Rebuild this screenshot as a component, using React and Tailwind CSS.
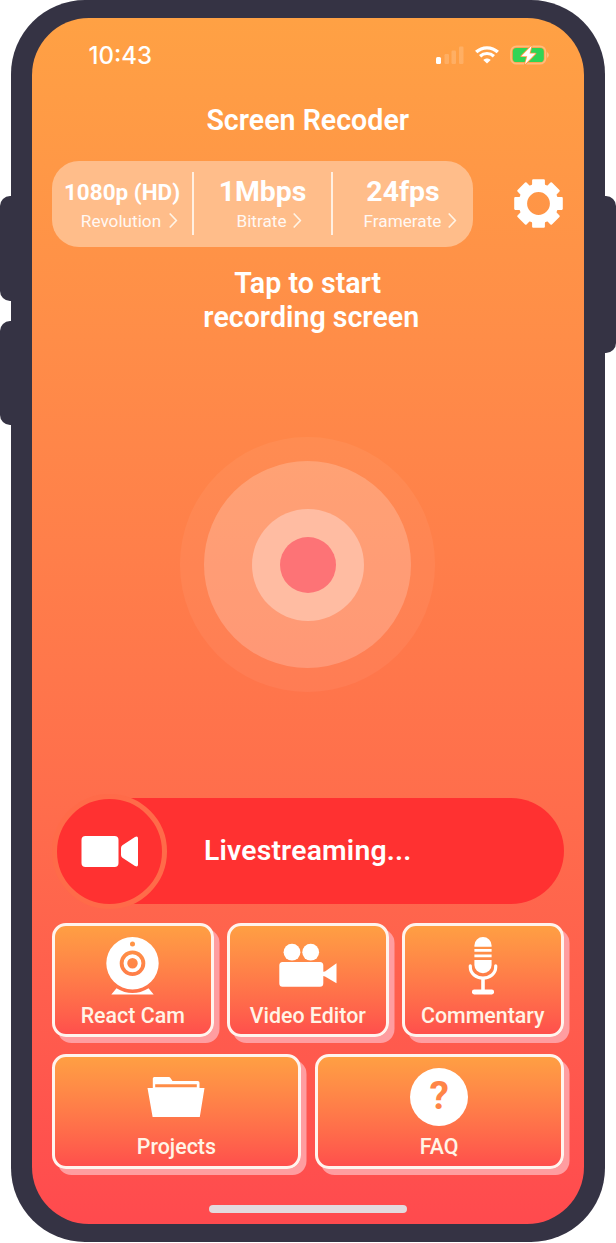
import React from "react";

function StatusBar() {
  return (
    <div className="flex h-[74px] items-center justify-between pl-[56.5px] pr-[34px] pt-px">
      <span className="font-['Inter',sans-serif] text-[24px] font-medium leading-none">10:43</span>
      <div className="flex items-center pb-0.5">
        <svg width="28" height="18" viewBox="0 0 28 18" fill="#fff" className="mr-[11px]">
          <rect x="0" y="11" width="5" height="7" rx="1.5" />
          <g opacity="0.17">
            <rect x="8.5" y="8" width="4.5" height="10" rx="1.2" />
            <rect x="15.5" y="4.5" width="4.5" height="13.5" rx="1.2" />
            <rect x="23" y="0.5" width="4.5" height="17.5" rx="1.2" />
          </g>
        </svg>
        <svg width="24" height="18" viewBox="0 0 24 18" className="mr-[11px]" fill="none" stroke="#fff">
          <path d="M1.2 6.1C7.2 .4 16.8 .4 22.8 6.1" strokeWidth="3.4" />
          <path d="M5.1 10.2C9 6.6 15 6.6 18.9 10.2" strokeWidth="3.2" />
          <path d="M8.3 14C10.3 12 13.7 12 15.7 14L12 17.6Z" fill="#fff" stroke="none" />
        </svg>
        <svg width="40" height="20" viewBox="0 0 40 20">
          <rect x="1" y="1.3" width="34.5" height="17.4" rx="5.5" fill="none" stroke="#fff" strokeOpacity=".3" strokeWidth="1.7" />
          <path d="M37.2 7Q40.4 10 37.2 13Z" fill="#fff" fillOpacity=".4" />
          <rect x="2.8" y="3" width="31" height="14" rx="3.6" fill="#30d455" />
          <path d="M21.6 .8L11.3 11.2H17.2L15 19.3L25.5 8.6H19.6Z" fill="#fff" stroke="#ff9b45" strokeWidth="1.8" paintOrder="stroke" strokeLinejoin="round" />
        </svg>
      </div>
    </div>
  );
}

function Chevron() {
  return (
    <svg width="9" height="15" viewBox="0 0 9 15" fill="none" stroke="#fff4e6" strokeWidth="1.7" strokeLinecap="round" strokeLinejoin="round">
      <path d="M1.2 1L7.4 7.5L1.2 14" />
    </svg>
  );
}

function Setting({ className, value, valueClass, label, gap }) {
  return (
    <div className={`flex flex-col items-center ${className}`}>
      <div className={`mt-[15px] h-8 whitespace-nowrap font-bold leading-8 ${valueClass}`}>{value}</div>
      <div className={`mt-[0.5px] flex h-6 items-center text-[17.2px] leading-6 ${gap}`}>
        <span className="opacity-90">{label}</span>
        <Chevron />
      </div>
    </div>
  );
}

function Gear() {
  const teeth = [0, 45, 90, 135, 180, 225, 270, 315];
  return (
    <svg width="49" height="49" viewBox="-24.5 -24.5 49 49" fill="#fff">
      <circle r="15.6" fill="none" stroke="#fff" strokeWidth="8.4" />
      {teeth.map((a) => (
        <path key={a} d="M-8.6 -16L-6.4 -19.2V-23.3Q-6.3 -24.3 -5.3 -24.3H5.3Q6.3 -24.3 6.4 -23.3V-19.2L8.6 -16Z" transform={`rotate(${a})`} />
      ))}
    </svg>
  );
}

function RecordButton() {
  return (
    <div className="mt-[103px] flex size-[255px] shrink-0 items-center justify-center self-center rounded-full bg-white/5">
      <div className="flex size-[207px] items-center justify-center rounded-full bg-white/20">
        <div className="flex size-[112px] items-center justify-center rounded-full bg-[#ffbca2]">
          <div className="size-14 rounded-full bg-[#fd7376]" />
        </div>
      </div>
    </div>
  );
}

function LiveBar() {
  return (
    <div className="mt-[106px] flex h-[106px] w-[511.5px] shrink-0">
      <div className="flex w-full items-center rounded-r-full bg-linear-to-r from-transparent from-[57px] to-[#ff3131] to-[57px]">
        <div className="-my-[5px] flex size-[115px] shrink-0 items-center justify-center rounded-full border-[5px] border-[#ff6b49] bg-[#ff3131]">
          <svg width="57" height="31" viewBox="0 0 57 31" fill="#fff">
            <rect x="0.5" y="0" width="37" height="31" rx="4" />
            <path d="M40 12Q40 10.2 41.4 9.3L54 .9Q57 -.4 57 2.2V28.8Q57 31.4 54 30.1L41.4 21.7Q40 20.8 40 19Z" />
          </svg>
        </div>
        <span className="ml-[37px] pt-px text-[28.3px] font-semibold leading-none tracking-[0.2px]">Livestreaming...</span>
      </div>
    </div>
  );
}

function WebcamIcon() {
  return (
    <svg width="53" height="58" viewBox="0 0 53 58">
      <path d="M10.5 51.2Q26.5 61 42.5 51.2L47.7 57.5H5.3Z" fill="#fff" />
      <path fill="#fff" fillRule="evenodd" d="M26.5 0A26.2 26.2 0 1 1 26.5 52.4A26.2 26.2 0 1 1 26.5 0ZM26.5 4.4A2.5 2.5 0 1 0 26.5 9.4A2.5 2.5 0 1 0 26.5 4.4ZM26.5 13.5A12.8 12.8 0 1 0 26.5 39.1A12.8 12.8 0 1 0 26.5 13.5Z" />
      <circle cx="26.5" cy="26.3" r="7.1" fill="none" stroke="#fff" strokeWidth="3.7" />
    </svg>
  );
}

function MovieIcon() {
  return (
    <svg width="58" height="58" viewBox="0 0 58 58" fill="#fff">
      <circle cx="13" cy="15.2" r="8.4" />
      <circle cx="31.7" cy="15.2" r="8.4" />
      <path d="M3.5 25H41Q44.3 25 44.3 28.5V34.8L46 34.5L57.5 26.2V46.3L46 39.4L44.3 39V46.3Q44.3 49.8 41 49.8H3.5Q.3 49.8 .3 46.3V28.5Q.3 25 3.5 25Z" />
    </svg>
  );
}

function MicIcon() {
  return (
    <svg width="30" height="58" viewBox="0 0 30 58" fill="#fff">
      <path d="M6.4 9.7V8.4A8.6 8.4 0 0 1 23.6 8.4V9.7Z" />
      <path d="M6.4 12H23.6V14.8H6.4ZM6.4 17.5H23.6V20.3H6.4Z" />
      <path d="M6.4 23H23.6V28A8.6 8.2 0 0 1 6.4 28Z" />
      <path d="M2.3 28.8V30C2.3 36.5 8 41 15 41C22 41 27.7 36.5 27.7 30V28.8" fill="none" stroke="#fff" strokeWidth="3.2" strokeLinecap="round" />
      <path d="M13.2 41H16.8V53H13.2Z" />
      <rect x="4" y="52.4" width="22" height="5" rx="2.1" />
    </svg>
  );
}

function FolderIcon() {
  return (
    <svg width="58" height="58" viewBox="0 0 58 58" fill="#fff">
      <path fillRule="evenodd" d="M5.8 20V10.5Q5.8 9 7.3 9H21.5Q23 9 23.8 10.4L25.5 13H50.8Q52.5 13 52.5 14.7V20H57.5L52.8 49H5.6L.5 20ZM8.2 16.2V19.3H49.8V16.2Z" />
    </svg>
  );
}

function FaqIcon() {
  return (
    <div className="flex size-[57.5px] items-center justify-center rounded-full bg-white text-[39px] font-bold leading-none text-[#ff8547]">
      ?
    </div>
  );
}

function Card({ icon, label }) {
  return (
    <div className="flex h-[114.5px] min-w-0 flex-1 flex-col items-center rounded-[14px] border-[3px] border-[#fff4ee] bg-linear-to-b from-[#ff9f43] to-[#ff4f4c] shadow-[5.5px_6px_0_#ff9da0]">
      <div className="mt-[11px] h-[58px]">{icon}</div>
      <span className="mt-[7px] whitespace-nowrap text-[21.4px] font-medium leading-7 text-[#fff4e6]">{label}</span>
    </div>
  );
}

export default function App() {
  return (
    <div className="flex h-[1243px] w-[616px] bg-white font-['Roboto',sans-serif] text-white">
      <div className="w-[11px] pt-[196px]">
        <div className="h-[105px] rounded-l-[10px] bg-[#353344]" />
        <div className="mt-5 h-[104px] rounded-l-[10px] bg-[#353344]" />
      </div>
      <div className="h-[1242px] w-[594px] rounded-[74px] bg-[#353344] pl-[21px] pr-[21.5px] pt-[18px]">
        <main className="flex h-[1206px] flex-col overflow-hidden rounded-[57px] bg-linear-to-b from-[#ffa144] to-[#ff4a4e]">
          <StatusBar />
          <h1 className="mt-[11px] h-[34px] text-center text-[28.6px] font-semibold leading-[34px]">Screen Recoder</h1>
          <div className="mt-6 flex items-center pl-5">
            <div className="flex h-[86px] w-[421px] rounded-[27px] bg-[#ffbd8a]">
              <Setting className="w-[140px]" value="1080p (HD)" valueClass="text-[22.5px]" label="Revolution" gap="gap-2 pl-[15px]" />
              <div className="mt-[11px] h-[63px] w-0.5 bg-[#fff0e2]" />
              <Setting className="w-[137px]" value="1Mbps" valueClass="text-[28.4px]" label="Bitrate" gap="gap-1.5 pl-[13px]" />
              <div className="mt-[11px] h-[63px] w-0.5 bg-[#fff0e2]" />
              <Setting className="w-[140px]" value="24fps" valueClass="text-[28.4px]" label="Framerate" gap="gap-[7px] pl-[15px]" />
            </div>
            <div className="-mt-px ml-[40.5px]">
              <Gear />
            </div>
          </div>
          <p className="mt-5 flex flex-col items-center text-[28.6px] font-semibold leading-[33.5px]">
            <span>Tap to start</span>
            <span className="ml-[7px]">recording screen</span>
          </p>
          <RecordButton />
          <div className="pl-5">
            <LiveBar />
          </div>
          <div className="mt-[18.5px] flex gap-[13.5px] px-5">
            <Card icon={<WebcamIcon />} label="React Cam" />
            <Card icon={<MovieIcon />} label="Video Editor" />
            <Card icon={<MicIcon />} label="Commentary" />
          </div>
          <div className="mt-[17px] flex gap-3.5 px-5">
            <Card icon={<FolderIcon />} label="Projects" />
            <Card icon={<FaqIcon />} label="FAQ" />
          </div>
          <div className="mt-9 h-2 w-[198px] shrink-0 self-center rounded-full bg-[#e3dade]" />
        </main>
      </div>
      <div className="w-[11px] pt-[196px]">
        <div className="h-[157px] rounded-r-[10px] bg-[#353344]" />
      </div>
    </div>
  );
}
